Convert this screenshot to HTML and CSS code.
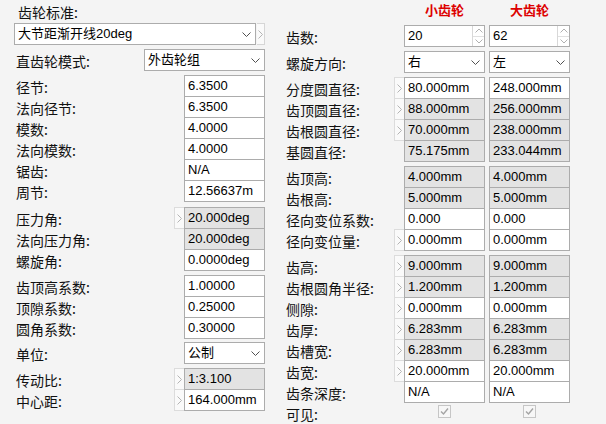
FILE: index.html
```html
<!DOCTYPE html>
<html lang="zh">
<head>
<meta charset="utf-8">
<title>齿轮</title>
<link rel="stylesheet" href="styles.css">
</head>
<body>
<div class="page">
  <section class="left">
    <div class="title"><span class="lbl">齿轮标准:</span></div>
    <div class="std-row">
      <div class="combo std">
        <span class="ctext">大节距渐开线20deg</span>
        <svg class="chev" width="9" height="5" viewBox="0 0 9 5"><path d="M0.5 0.5 L4.5 4.5 L8.5 0.5"/></svg>
      </div>
      <div class="side-btn"><svg class="chev-r" width="5" height="9" viewBox="0 0 5 9"><path d="M0.5 0.5 L4.5 4.5 L0.5 8.5"/></svg></div>
    </div>
    <div class="row gap4">
      <span class="lbl">直齿轮模式:</span>
      <div class="combo mode">
        <span class="ctext">外齿轮组</span>
        <svg class="chev" width="9" height="5" viewBox="0 0 9 5"><path d="M0.5 0.5 L4.5 4.5 L8.5 0.5"/></svg>
      </div>
    </div>

    <div class="group gap4">
      <div class="row"><span class="lbl">径节:</span><div class="field">6.3500</div></div>
      <div class="row"><span class="lbl">法向径节:</span><div class="field">6.3500</div></div>
      <div class="row"><span class="lbl">模数:</span><div class="field">4.0000</div></div>
      <div class="row"><span class="lbl">法向模数:</span><div class="field">4.0000</div></div>
      <div class="row"><span class="lbl">锯齿:</span><div class="field">N/A</div></div>
      <div class="row"><span class="lbl">周节:</span><div class="field">12.56637m</div></div>
    </div>

    <div class="group gap5">
      <div class="row"><span class="lbl">压力角:</span><div class="arrow"><svg class="chev-r" width="5" height="9" viewBox="0 0 5 9"><path d="M0.5 0.5 L4.5 4.5 L0.5 8.5"/></svg></div><div class="field ro">20.000deg</div></div>
      <div class="row"><span class="lbl">法向压力角:</span><div class="field ro">20.000deg</div></div>
      <div class="row"><span class="lbl">螺旋角:</span><div class="field">0.0000deg</div></div>
    </div>

    <div class="group gap4">
      <div class="row"><span class="lbl">齿顶高系数:</span><div class="field">1.00000</div></div>
      <div class="row"><span class="lbl">顶隙系数:</span><div class="field">0.25000</div></div>
      <div class="row"><span class="lbl">圆角系数:</span><div class="field">0.30000</div></div>
    </div>

    <div class="row gap3">
      <span class="lbl">单位:</span>
      <div class="combo small">
        <span class="ctext">公制</span>
        <svg class="chev" width="9" height="5" viewBox="0 0 9 5"><path d="M0.5 0.5 L4.5 4.5 L8.5 0.5"/></svg>
      </div>
    </div>

    <div class="group gap4">
      <div class="row"><span class="lbl">传动比:</span><div class="arrow"><svg class="chev-r" width="5" height="9" viewBox="0 0 5 9"><path d="M0.5 0.5 L4.5 4.5 L0.5 8.5"/></svg></div><div class="field ro">1:3.100</div></div>
      <div class="row"><span class="lbl">中心距:</span><div class="arrow"><svg class="chev-r" width="5" height="9" viewBox="0 0 5 9"><path d="M0.5 0.5 L4.5 4.5 L0.5 8.5"/></svg></div><div class="field">164.000mm</div></div>
    </div>
  </section>

  <section class="right">
    <div class="hdr-row">
      <span class="hdr-pad"></span>
      <span class="hdr">小齿轮</span>
      <span class="hdr c2">大齿轮</span>
    </div>

    <div class="rrow">
      <span class="rlbl">齿数:</span><span class="slot"></span>
      <div class="field spinner"><span class="sval">20</span><span class="spin"><span class="sup"><svg width="8" height="5" viewBox="0 0 8 5"><path d="M0.5 4.5 L4 1 L7.5 4.5"/></svg></span><span class="sdn"><svg width="8" height="5" viewBox="0 0 8 5"><path d="M0.5 0.5 L4 4 L7.5 0.5"/></svg></span></span></div>
      <div class="field spinner c2"><span class="sval">62</span><span class="spin"><span class="sup"><svg width="8" height="5" viewBox="0 0 8 5"><path d="M0.5 4.5 L4 1 L7.5 4.5"/></svg></span><span class="sdn"><svg width="8" height="5" viewBox="0 0 8 5"><path d="M0.5 0.5 L4 4 L7.5 0.5"/></svg></span></span></div>
    </div>

    <div class="rrow gap4">
      <span class="rlbl">螺旋方向:</span><span class="slot"></span>
      <div class="combo small"><span class="ctext">右</span><svg class="chev" width="9" height="5" viewBox="0 0 9 5"><path d="M0.5 0.5 L4.5 4.5 L8.5 0.5"/></svg></div>
      <div class="combo small c2"><span class="ctext">左</span><svg class="chev" width="9" height="5" viewBox="0 0 9 5"><path d="M0.5 0.5 L4.5 4.5 L8.5 0.5"/></svg></div>
    </div>

    <div class="group gap4">
      <div class="rrow"><span class="rlbl">分度圆直径:</span><div class="arrow"><svg class="chev-r" width="5" height="9" viewBox="0 0 5 9"><path d="M0.5 0.5 L4.5 4.5 L0.5 8.5"/></svg></div><div class="field">80.000mm</div><div class="field c2">248.000mm</div></div>
      <div class="rrow"><span class="rlbl">齿顶圆直径:</span><div class="arrow"><svg class="chev-r" width="5" height="9" viewBox="0 0 5 9"><path d="M0.5 0.5 L4.5 4.5 L0.5 8.5"/></svg></div><div class="field ro">88.000mm</div><div class="field ro c2">256.000mm</div></div>
      <div class="rrow"><span class="rlbl">齿根圆直径:</span><div class="arrow"><svg class="chev-r" width="5" height="9" viewBox="0 0 5 9"><path d="M0.5 0.5 L4.5 4.5 L0.5 8.5"/></svg></div><div class="field ro">70.000mm</div><div class="field ro c2">238.000mm</div></div>
      <div class="rrow"><span class="rlbl">基圆直径:</span><span class="slot"></span><div class="field ro">75.175mm</div><div class="field ro c2">233.044mm</div></div>
    </div>

    <div class="group gap4">
      <div class="rrow"><span class="rlbl">齿顶高:</span><span class="slot"></span><div class="field ro">4.000mm</div><div class="field ro c2">4.000mm</div></div>
      <div class="rrow"><span class="rlbl">齿根高:</span><span class="slot"></span><div class="field ro">5.000mm</div><div class="field ro c2">5.000mm</div></div>
      <div class="rrow"><span class="rlbl">径向变位系数:</span><span class="slot"></span><div class="field">0.000</div><div class="field c2">0.000</div></div>
      <div class="rrow"><span class="rlbl">径向变位量:</span><div class="arrow"><svg class="chev-r" width="5" height="9" viewBox="0 0 5 9"><path d="M0.5 0.5 L4.5 4.5 L0.5 8.5"/></svg></div><div class="field">0.000mm</div><div class="field c2">0.000mm</div></div>
    </div>

    <div class="group gap4">
      <div class="rrow"><span class="rlbl">齿高:</span><div class="arrow"><svg class="chev-r" width="5" height="9" viewBox="0 0 5 9"><path d="M0.5 0.5 L4.5 4.5 L0.5 8.5"/></svg></div><div class="field ro">9.000mm</div><div class="field ro c2">9.000mm</div></div>
      <div class="rrow"><span class="rlbl">齿根圆角半径:</span><div class="arrow"><svg class="chev-r" width="5" height="9" viewBox="0 0 5 9"><path d="M0.5 0.5 L4.5 4.5 L0.5 8.5"/></svg></div><div class="field ro">1.200mm</div><div class="field ro c2">1.200mm</div></div>
      <div class="rrow"><span class="rlbl">侧隙:</span><div class="arrow"><svg class="chev-r" width="5" height="9" viewBox="0 0 5 9"><path d="M0.5 0.5 L4.5 4.5 L0.5 8.5"/></svg></div><div class="field">0.000mm</div><div class="field c2">0.000mm</div></div>
      <div class="rrow"><span class="rlbl">齿厚:</span><div class="arrow"><svg class="chev-r" width="5" height="9" viewBox="0 0 5 9"><path d="M0.5 0.5 L4.5 4.5 L0.5 8.5"/></svg></div><div class="field ro">6.283mm</div><div class="field ro c2">6.283mm</div></div>
      <div class="rrow"><span class="rlbl">齿槽宽:</span><div class="arrow"><svg class="chev-r" width="5" height="9" viewBox="0 0 5 9"><path d="M0.5 0.5 L4.5 4.5 L0.5 8.5"/></svg></div><div class="field ro">6.283mm</div><div class="field ro c2">6.283mm</div></div>
      <div class="rrow"><span class="rlbl">齿宽:</span><div class="arrow"><svg class="chev-r" width="5" height="9" viewBox="0 0 5 9"><path d="M0.5 0.5 L4.5 4.5 L0.5 8.5"/></svg></div><div class="field">20.000mm</div><div class="field c2">20.000mm</div></div>
      <div class="rrow"><span class="rlbl">齿条深度:</span><span class="slot"></span><div class="field">N/A</div><div class="field c2">N/A</div></div>
    </div>

    <div class="rrow check-row">
      <span class="rlbl">可见:</span><span class="slot"></span>
      <div class="cbcell"><span class="cb"><svg width="11" height="11" viewBox="0 0 11 11"><path d="M2 5.5 L4.5 8 L9 2.5"/></svg></span></div>
      <div class="cbcell c2"><span class="cb"><svg width="11" height="11" viewBox="0 0 11 11"><path d="M2 5.5 L4.5 8 L9 2.5"/></svg></span></div>
    </div>
  </section>
</div>
</body>
</html>
```

FILE: styles.css
```css
* { box-sizing: border-box; }

body {
  margin: 0;
  background: #f4f4f4;
  color: #000;
  font-family: "Liberation Sans", "Noto Sans CJK SC", sans-serif;
  font-size: 13px;
}

.page {
  display: flex;
  width: 606px;
  height: 424px;
  overflow: hidden;
}

.left {
  width: 251px;
  margin-left: 14px;
  display: flex;
  flex-direction: column;
}

.right {
  width: 284px;
  margin-left: 21px;
  display: flex;
  flex-direction: column;
}

.lbl, .rlbl {
  font-family: "Noto Sans CJK SC", sans-serif;
  font-size: 14px;
  line-height: 20px;
  padding-top: 2px;
  white-space: nowrap;
  color: #111;
}

.title {
  height: 23px;
  display: flex;
  padding-left: 2px;
}

.lbl { padding-left: 2px; }

.gap3 { margin-top: 3px; }
.gap4 { margin-top: 4px; }
.gap5 { margin-top: 5px; }

.group { display: flex; flex-direction: column; }
.group > .row + .row,
.group > .rrow + .rrow { margin-top: -1px; }

.row {
  display: flex;
  height: 22px;
}
.row .lbl { flex: 1; }

.std-row {
  display: flex;
  height: 22px;
}

.field {
  width: 81px;
  height: 22px;
  flex: none;
  border: 1px solid #acacac;
  background: #fff;
  line-height: 20px;
  padding-left: 3px;
  overflow: hidden;
  white-space: nowrap;
}
.field.ro { background: #e3e3e3; }

.arrow {
  width: 10px;
  height: 22px;
  flex: none;
  border: 1px solid #dcdcdc;
  border-right: none;
  background: #fafafa;
  display: flex;
  align-items: center;
  justify-content: center;
}

.chev-r path {
  fill: none;
  stroke: #b4b4b4;
  stroke-width: 1;
}

.combo {
  height: 22px;
  flex: none;
  border: 1px solid #acacac;
  background: #fff;
  display: flex;
  align-items: center;
  justify-content: space-between;
  padding: 0 4px 0 3px;
  line-height: 20px;
  white-space: nowrap;
}
.combo.std { width: 242px; }
.combo.mode { width: 121px; }
.combo.small { width: 81px; }

.chev path {
  fill: none;
  stroke: #505050;
  stroke-width: 1;
}

.side-btn {
  width: 9px;
  height: 22px;
  margin-left: 1px;
  border: 1px solid #d6d6d6;
  border-left: none;
  background: #fafafa;
  display: flex;
  align-items: center;
  justify-content: center;
}

/* right panel */
.hdr-row {
  display: flex;
  height: 28px;
}
.hdr-pad { width: 118px; }
.hdr {
  width: 81px;
  text-align: center;
  font-family: "Noto Sans CJK SC", sans-serif;
  font-weight: bold;
  font-size: 13px;
  line-height: 20px;
  color: #dd0000;
}

.c2 { margin-left: 4px; }

.rrow {
  display: flex;
  height: 22px;
}
.rlbl { width: 108px; flex: none; }
.slot { width: 10px; flex: none; }

.spinner {
  display: flex;
  padding-left: 0;
}
.sval { flex: 1; padding-left: 3px; }
.spin {
  width: 12px;
  display: flex;
  flex-direction: column;
  border-left: 1px solid #d8d8d8;
}
.sup, .sdn {
  flex: 1;
  display: flex;
  align-items: center;
  justify-content: center;
}
.sdn { border-top: 1px solid #e0e0e0; }
.spin path {
  fill: none;
  stroke: #b0b0b0;
  stroke-width: 1;
}

.check-row {
  margin-top: 1px;
  height: 20px;
}
.check-row .rlbl { padding-top: 0; }
.cbcell {
  width: 81px;
  flex: none;
  display: flex;
  justify-content: center;
  padding-top: 1px;
}
.cb {
  width: 13px;
  height: 13px;
  border: 1px solid #c6c6c6;
  background: #f7f7f7;
  display: flex;
  align-items: center;
  justify-content: center;
}
.cb path {
  fill: none;
  stroke: #a4a4a4;
  stroke-width: 1.4;
}
```
